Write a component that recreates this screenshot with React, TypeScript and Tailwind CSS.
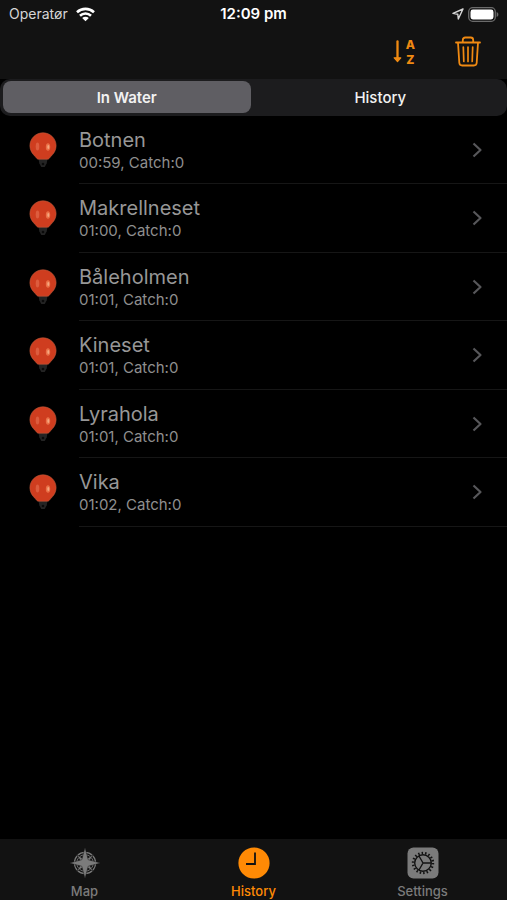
import { useState } from 'react';
import clsx from 'clsx';

const traps = [
    { name: 'Botnen', time: '00:59', count: 0 },
    { name: 'Makrellneset', time: '01:00', count: 0 },
    { name: 'Båleholmen', time: '01:01', count: 0 },
    { name: 'Kineset', time: '01:01', count: 0 },
    { name: 'Lyrahola', time: '01:01', count: 0 },
    { name: 'Vika', time: '01:02', count: 0 },
];

const segments = ['In Water', 'History'];

function WifiIcon() {
    return (
        <svg className="h-[15px] w-[19px]" viewBox="0 0 19 15" fill="none" stroke="#fff" strokeWidth="2.6">
            <path d="M1 5.2C5.800.700 13.200.700 18 5.200" />
            <path d="M4 8.700c3.100-2.900 7.900-2.900 11 0" />
            <path d="M9.500 14.300 6.200 11c1.900-1.700 4.700-1.700 6.600 0Z" fill="#fff" stroke="none" />
        </svg>
    );
}

function LocationIcon() {
    return (
        <svg className="h-3 w-3" viewBox="0 0 12 12" fill="none" stroke="#d6d6d6" strokeWidth="1.4" strokeLinejoin="round">
            <path d="M11 1 1 5.400l4.800.8.500 4.800Z" />
        </svg>
    );
}

function BatteryIcon() {
    return (
        <svg className="h-[15px] w-[31px]" viewBox="0 0 31 15">
            <rect x=".7" y=".7" width="26.6" height="13.6" rx="4" fill="none" stroke="#6b6b6b" strokeWidth="1.3" />
            <rect x="2.5" y="2.5" width="23" height="10" rx="2.4" fill="#fff" />
            <path d="M28.600 5v5c1.200-.5 1.800-1.400 1.800-2.500S29.800 5.500 28.600 5Z" fill="#6b6b6b" />
        </svg>
    );
}

function TrashIcon() {
    return (
        <svg className="h-[31px] w-[26px]" viewBox="0 0 26 31" fill="none" stroke="currentColor" strokeWidth="1.8" strokeLinecap="round" strokeLinejoin="round">
            <path d="M1 6.500h24" />
            <path d="M7.800 6V4c0-1.600.9-2.500 2.500-2.500h5.400c1.600 0 2.500.9 2.500 2.500v2" />
            <path d="m3 6.800 1.300 20c.1 1.700 1.200 2.700 2.900 2.700h11.600c1.700 0 2.800-1 2.900-2.700L23 6.800" />
            <path d="m8.300 11 .5 14.500M13 11v14.500M17.700 11l-.5 14.500" strokeWidth="1.7" />
        </svg>
    );
}

function ArrowDownIcon() {
    return (
        <svg className="h-[23px] w-[9px]" viewBox="0 0 9 23" fill="none" stroke="currentColor" strokeWidth="2.3" strokeLinecap="round">
            <path d="M4.500 1.500V19" />
            <path d="M1.200 17.800h6.600L4.500 21.600Z" fill="currentColor" strokeWidth="1.2" strokeLinejoin="round" />
        </svg>
    );
}

function BuoyIcon() {
    return (
        <svg className="h-[37px] w-7" viewBox="0 0 28 37">
            <path d="M9.500 27h9l-.8 4.300-2 3.700h-3.400l-2-3.700Z" fill="#242424" />
            <circle cx="14" cy="32" r="1.300" fill="#0a0a0a" />
            <path d="M14 .8C6.700.8.900 6.600.900 13.700c0 4.800 2.500 8 5.300 10.800 1.100 1.100 1.700 2.700 3.200 2.700h9.200c1.500 0 2.100-1.600 3.200-2.700 2.800-2.800 5.300-6 5.300-10.800C27.100 6.600 21.300.8 14 .8Z" fill="#cf3d1f" stroke="#bd5a3c" strokeWidth=".6" />
            <ellipse cx="8.500" cy="14.500" rx="1.800" ry="4" fill="#e2694b" opacity=".7" />
            <ellipse cx="19" cy="15" rx="2.200" ry="3.800" fill="#ea7048" />
            <ellipse cx="19.300" cy="15" rx="1" ry="2" fill="#f6a880" />
        </svg>
    );
}

function ChevronIcon() {
    return (
        <svg className="h-4 w-[11px]" viewBox="0 0 11 16" fill="none" stroke="currentColor" strokeWidth="2.2" strokeLinejoin="round">
            <path d="m1.500 1.500 7 6.500-7 6.500" />
        </svg>
    );
}

function CompassIcon() {
    return (
        <svg className="h-8 w-8" viewBox="-16 -16 32 32" fill="currentColor">
            <circle r="10.600" fill="none" stroke="currentColor" strokeWidth="1.1" />
            <circle r="8.300" fill="none" stroke="currentColor" strokeWidth="1" />
            <path d="M0-12 2.200-2.200 12 0 2.200 2.200 0 12-2.200 2.200-12 0-2.200-2.200Z" transform="rotate(45)" stroke="#121212" strokeWidth=".5" />
            <path d="M0-15.500 3.200-3.200 15.500 0 3.200 3.200 0 15.500-3.200 3.200-15.500 0-3.200-3.200Z" stroke="#121212" strokeWidth=".4" />
        </svg>
    );
}

function ClockIcon() {
    return (
        <svg className="h-8 w-8" viewBox="0 0 32 32">
            <circle cx="16" cy="16" r="15.600" fill="currentColor" />
            <path d="M17 5.500V17H8" fill="none" stroke="#121212" strokeWidth="1.8" />
        </svg>
    );
}

function GearIcon() {
    return (
        <svg className="h-8 w-8" viewBox="-16 -16 32 32">
            <rect x="-15.500" y="-15.500" width="31" height="31" rx="6" fill="currentColor" />
            <g fill="none" stroke="#121212">
                <circle r="10" strokeWidth="2.4" strokeDasharray="1.5 1.991" />
                <circle r="8.300" strokeWidth="1.4" />
                <path d="M0 0H8M0 0-4 7M0 0-4-7" strokeWidth="1.4" />
            </g>
        </svg>
    );
}

const tabs = [
    { label: 'Map', icon: <CompassIcon /> },
    { label: 'History', icon: <ClockIcon /> },
    { label: 'Settings', icon: <GearIcon /> },
];

function StatusBar() {
    return (
        <div className="grid h-7 grid-cols-3 items-center px-2 text-white">
            <div className="flex items-center gap-2 pl-px text-sm text-[#d6d6d6]">
                <span>Operatør</span>
                <WifiIcon />
            </div>
            <div className="text-center text-[15px] font-semibold">12:09 pm</div>
            <div className="flex items-center justify-end gap-1">
                <LocationIcon />
                <BatteryIcon />
            </div>
        </div>
    );
}

export default function App() {
    const [segment, setSegment] = useState('In Water');
    const [tab, setTab] = useState('History');

    return (
        <div className="flex min-h-screen flex-col bg-black font-['Inter','Liberation_Sans',sans-serif]">
            <header className="bg-[#121212]">
                <StatusBar />
                <div className="flex h-[51px] items-center justify-end gap-10 px-[26px] pb-1 text-[#f08a12]">
                    <button className="flex items-center gap-1" aria-label="Sort by name">
                        <ArrowDownIcon />
                        <span className="flex flex-col text-xs leading-[15px] font-extrabold">
                            <span>A</span>
                            <span>Z</span>
                        </span>
                    </button>
                    <button aria-label="Delete">
                        <TrashIcon />
                    </button>
                </div>
            </header>

            {/* Segmented control */}
            <div className="flex gap-1.5 rounded-[10px] bg-[#1c1c1e] px-[3px] pt-0.5 pb-[3px]">
                {segments.map((name) => (
                    <button
                        key={name}
                        onClick={() => setSegment(name)}
                        aria-pressed={segment === name}
                        className={clsx(
                            'h-8 flex-1 rounded-lg pt-0.5 text-[15px] text-[#f2f2f2]',
                            segment === name ? 'bg-[#5f5e63] font-semibold' : 'font-medium',
                        )}
                    >
                        {name}
                    </button>
                ))}
            </div>

            <main className="flex-1">
                <ul>
                    {traps.map((trap) => (
                        <li key={trap.name} className="flex odd:h-[68px] even:h-[69px]">
                            <button className="flex flex-1 text-left">
                                <span className="flex w-[79px] items-center self-stretch pl-[29px]">
                                    <BuoyIcon />
                                </span>
                                <span className="flex flex-1 items-center justify-between self-stretch border-b border-[#161616] pr-6">
                                    <span className="flex flex-col pt-0.5">
                                        <span className="text-xl leading-6 text-[#979797]">{trap.name}</span>
                                        <span className="text-[15px] leading-[22px] text-[#8f8f8f]">
                                            {trap.time}, Catch:{trap.count}
                                        </span>
                                    </span>
                                    <span className="text-[#57575a]">
                                        <ChevronIcon />
                                    </span>
                                </span>
                            </button>
                        </li>
                    ))}
                </ul>
            </main>

            {/* Tab bar */}
            <nav className="grid h-[61px] grid-cols-3 bg-[#121212]">
                {tabs.map(({ label, icon }) => (
                    <button
                        key={label}
                        onClick={() => setTab(label)}
                        className={clsx(
                            'flex flex-col items-center gap-1 pt-2 text-[13px] leading-4 font-medium',
                            tab === label ? 'text-[#ff8a05]' : 'text-[#7b7b7b]',
                        )}
                    >
                        {icon}
                        <span>{label}</span>
                    </button>
                ))}
            </nav>
        </div>
    );
}
